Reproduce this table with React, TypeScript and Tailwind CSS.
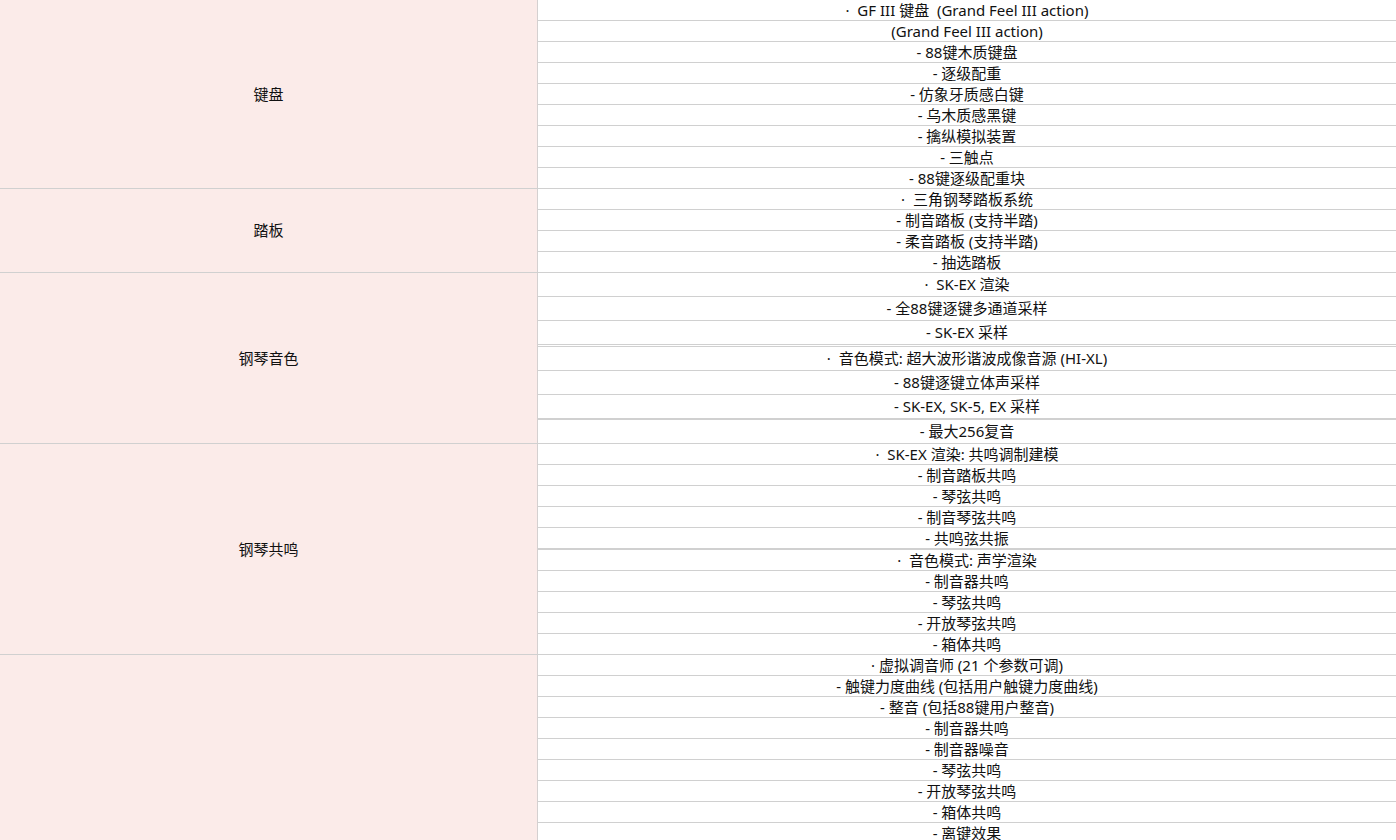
import { FC } from "react"

type Row = { text: string; cls: string }

type Section = { label: string; rows: Row[] }

const r = (text: string, cls = "h-[21px] border-b") => ({ text, cls })

const SECTIONS: Section[] = [
  {
    label: "键盘",
    rows: [
      r("·  GF III 键盘  (Grand Feel III action)"),
      r("(Grand Feel III action)"),
      r("- 88键木质键盘"),
      r("- 逐级配重"),
      r("- 仿象牙质感白键"),
      r("- 乌木质感黑键"),
      r("- 擒纵模拟装置"),
      r("- 三触点"),
      r("- 88键逐级配重块", "h-[20px]"),
    ],
  },
  {
    label: "踏板",
    rows: [
      r("·  三角钢琴踏板系统"),
      r("- 制音踏板 (支持半踏)"),
      r("- 柔音踏板 (支持半踏)"),
      r("- 抽选踏板", "h-[20px]"),
    ],
  },
  {
    label: "钢琴音色",
    rows: [
      r("·  SK-EX 渲染", "h-[24px] border-b"),
      r("- 全88键逐键多通道采样", "h-[24px] border-b"),
      r("- SK-EX 采样", "h-[24px] border-b mb-px"),
      r("·  音色模式: 超大波形谐波成像音源 (HI-XL)", "h-[25px] border-y"),
      r("- 88键逐键立体声采样", "h-[24px] border-b"),
      r("- SK-EX, SK-5, EX 采样", "h-[24px] border-b"),
      r("- 最大256复音", "h-[24px] border-t"),
    ],
  },
  {
    label: "钢琴共鸣",
    rows: [
      r("·  SK-EX 渲染: 共鸣调制建模"),
      r("- 制音踏板共鸣"),
      r("- 琴弦共鸣"),
      r("- 制音琴弦共鸣"),
      r("- 共鸣弦共振"),
      r("·  音色模式: 声学渲染", "h-[22px] border-y"),
      r("- 制音器共鸣"),
      r("- 琴弦共鸣"),
      r("- 开放琴弦共鸣"),
      r("- 箱体共鸣", "h-[20px]"),
    ],
  },
  {
    label: "",
    rows: [
      r("· 虚拟调音师 (21 个参数可调)"),
      r("- 触键力度曲线 (包括用户触键力度曲线)"),
      r("- 整音 (包括88键用户整音)"),
      r("- 制音器共鸣"),
      r("- 制音器噪音"),
      r("- 琴弦共鸣"),
      r("- 开放琴弦共鸣"),
      r("- 箱体共鸣"),
      r("- 离键效果", "h-[20px]"),
    ],
  },
]

const SpecSection: FC<{ section: Section }> = ({ section }) => (
  <div className="flex border-b border-[#d0d0d0]">
    <div className="w-[538px] shrink-0 bg-[#fbebe9] border-r border-[#d4d0d0] flex items-center justify-center">
      {section.label}
    </div>
    <div className="flex-1 flex flex-col">
      {section.rows.map((row, idx) => (
        <div
          key={idx}
          className={`${row.cls} border-[#d0d0d0] flex items-center justify-center whitespace-pre`}
        >
          {row.text}
        </div>
      ))}
    </div>
  </div>
)

const App: FC = () => {
  return (
    <div className="w-[1396px] bg-white text-[15px] leading-none text-[#111] font-['Noto_Sans','Noto_Sans_CJK_SC',sans-serif]">
      {SECTIONS.map((section, idx) => (
        <SpecSection key={idx} section={section} />
      ))}
    </div>
  )
}

export default App
